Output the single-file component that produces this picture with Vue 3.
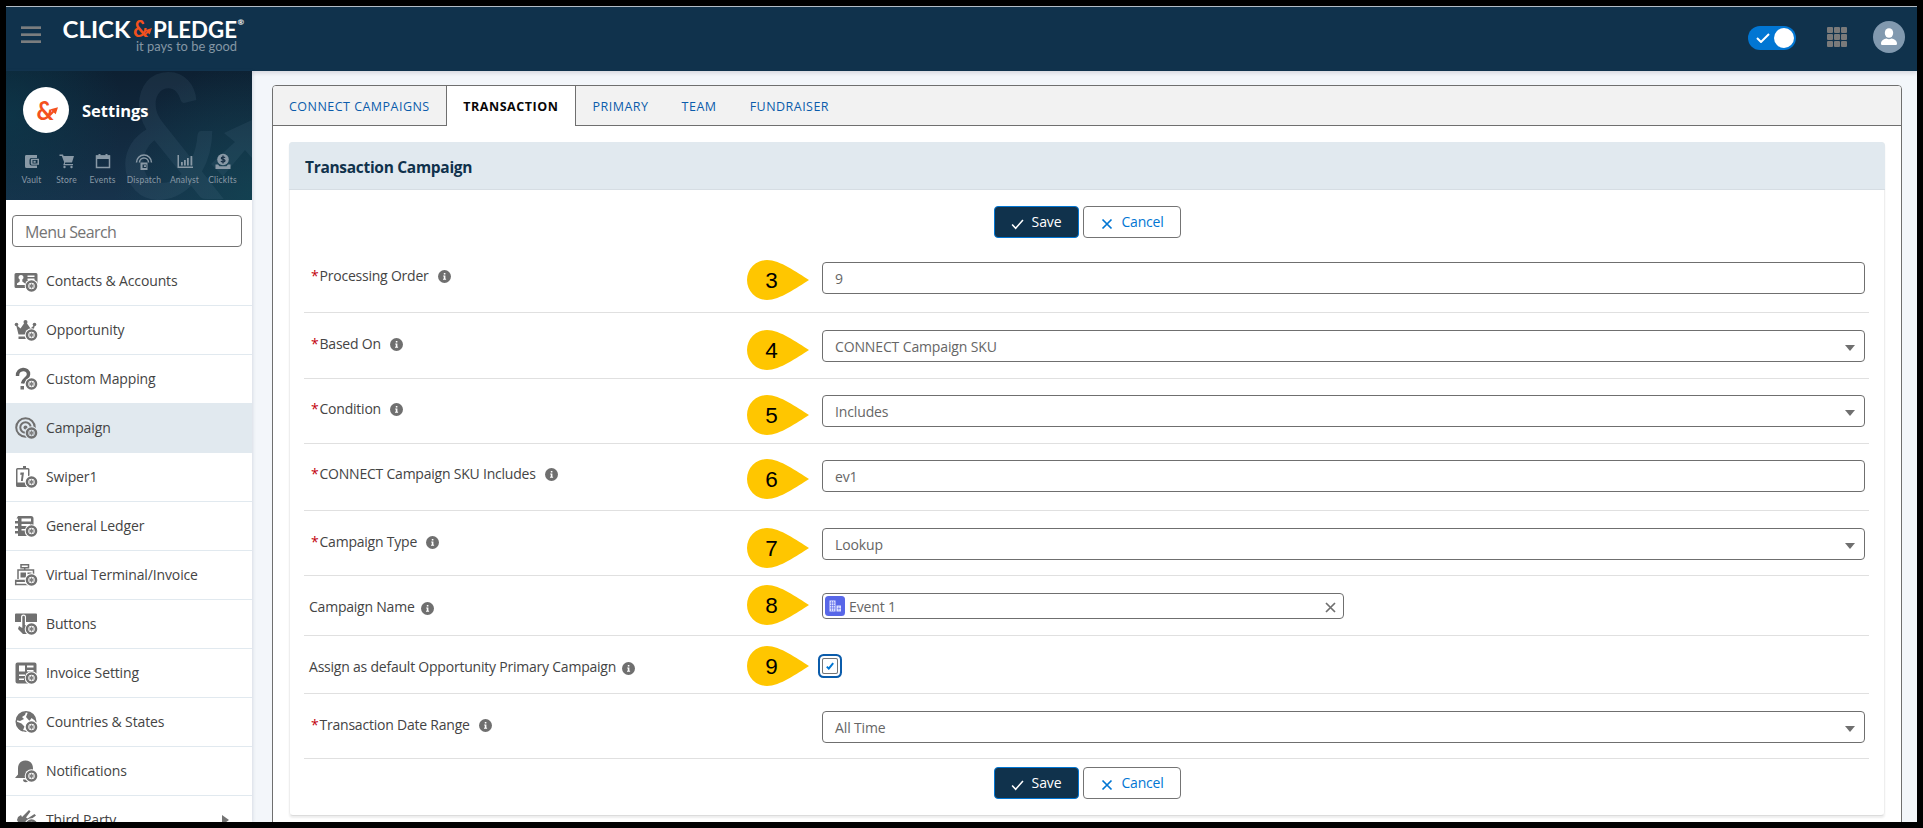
<template>
  <div class="frame">
    <!-- Top bar -->
    <header class="topbar">
      <div class="topbar-left">
        <button class="hamburger" aria-label="Menu"><span></span><span></span><span></span></button>
        <svg class="logo" width="184" height="40" viewBox="0 0 184 40">
          <text class="logo-word" x="-0.5" y="22.5" textLength="68" lengthAdjust="spacingAndGlyphs">CLICK</text>
          <text class="logo-amp" x="70" y="22.3" textLength="15" lengthAdjust="spacingAndGlyphs">&amp;</text>
          <path class="logo-arrow" d="M82 15.200l7-2.200-2.300 6.500-1.700-1.600-3.300 3.400-1.200-1.200 3.200-3.300z" />
          <text class="logo-word" x="90" y="22.5" textLength="84" lengthAdjust="spacingAndGlyphs">PLEDGE</text>
          <text class="logo-reg" x="174.5" y="10">®</text>
          <text class="logo-tag" x="73" y="35.5" textLength="101" lengthAdjust="spacingAndGlyphs">it pays to be good</text>
        </svg>
      </div>
      <div class="topbar-right">
        <div class="toggle">
          <svg width="14" height="10" viewBox="0 0 14 10"><path d="M1 5l4 4L13 1" /></svg>
          <span class="knob"></span>
        </div>
        <div class="waffle"><i v-for="n in 9" :key="n"></i></div>
        <div class="avatar">
          <svg width="32" height="32" viewBox="0 0 32 32">
            <ellipse cx="16" cy="12" rx="4.2" ry="4.8" />
            <path d="M8 22.4c0-3 3.1-4.8 5.4-5 1.7 1.1 3.500 1.100 5.200 0 2.300.2 5.400 2 5.400 5 0 1-.6 1.600-1.500 1.600h-13c-.9 0-1.500-.6-1.500-1.600z" />
          </svg>
        </div>
      </div>
    </header>

    <div class="body">
      <!-- Sidebar -->
      <aside class="sidebar">
        <div class="banner">
          <svg class="banner-mark" width="246" height="129" viewBox="0 0 246 129">
            <text x="114" y="128" textLength="104" lengthAdjust="spacingAndGlyphs">&amp;</text>
            <path d="M218 62l28-13v38l-7-8-22 26-12-12 24-22z" />
          </svg>
          <div class="banner-title">
            <div class="badge">
              <svg width="46" height="46" viewBox="0 0 46 46">
                <text class="badge-amp" x="13.500" y="33" textLength="17" lengthAdjust="spacingAndGlyphs">&amp;</text>
                <path class="logo-arrow" d="M27.500 22.300l7.500-2-2.300 7-1.900-1.800-3.300 3.500-1.400-1.400 3.300-3.500z" />
              </svg>
            </div>
            <h1>Settings</h1>
          </div>
          <nav class="apps">
            <a v-for="app in apps" :key="app.name" class="app">
              <svg width="18" height="18" viewBox="0 0 18 18" v-html="app.icon"></svg>
              <span>{{ app.name }}</span>
            </a>
          </nav>
        </div>

        <input class="menu-search" type="text" placeholder="Menu Search" />

        <ul class="menu">
          <li v-for="item in menu" :key="item.name" :class="{ active: item.name === 'Campaign' }">
            <svg class="menu-icon" width="24" height="24" viewBox="0 0 24 24">
              <g v-html="item.icon"></g>
              <circle cx="17.500" cy="17" r="6.800" class="gear-gap" />
              <circle cx="17.500" cy="17" r="4.500" class="gear-ring" />
              <path class="gear-core" d="M17.500 14.400v5.200M15.300 15.700l4.400 2.600M15.300 18.300l4.400-2.600" />
            </svg>
            <span>{{ item.name }}</span>
            <i v-if="item.children" class="caret"></i>
          </li>
        </ul>
      </aside>

      <!-- Content -->
      <main class="content">
        <div class="tabs">
          <div class="tab-bar">
            <a v-for="tab in tabs" :key="tab" class="tab" :class="{ active: tab === 'Transaction' }">{{ tab }}</a>
          </div>

          <section class="card">
            <h2 class="card-title">Transaction Campaign</h2>
            <div class="actions">
              <button class="btn save">
                <svg width="14" height="12" viewBox="0 0 14 12"><path d="M1.200 6.500l3.800 4L12.800 1.700" /></svg>
                Save
              </button>
              <button class="btn cancel">
                <svg width="12" height="12" viewBox="0 0 12 12"><path d="M1.500 1.500l9 9M10.500 1.500l-9 9" /></svg>
                Cancel
              </button>
            </div>

            <div
              v-for="row in rows"
              :key="row.label"
              class="row"
              :class="{ tight: row.tight }"
              :style="{ height: row.height + 'px' }"
            >
              <div class="label" :class="{ required: row.required }">
                <abbr v-if="row.required">*</abbr>
                <span>{{ row.label }}</span>
                <svg class="info" width="13" height="13" viewBox="0 0 13 13">
                  <circle cx="6.500" cy="6.500" r="6.500" />
                  <path d="M5.800 2.900h1.600v1.600H5.800zM5.200 5.400h2.200v3.300h.7v1H5v-1h.8V6.400h-.6z" />
                </svg>
              </div>

              <div class="pin-cell">
                <svg v-if="row.step" class="pin" :style="{ marginTop: row.pinTop + 'px' }" width="62" height="40" viewBox="0 0 62 40">
                  <path d="M62 20C50 12.500 33 0 20 0a20 20 0 0 0 0 40C33 40 50 27.500 62 20z" />
                  <text x="24.500" y="28" text-anchor="middle">{{ row.step }}</text>
                </svg>
              </div>

              <div class="control">
                <div v-if="row.type === 'lookup'" class="field lookup">
                  <svg width="20" height="20" viewBox="0 0 20 20">
                    <rect width="20" height="20" rx="3.500" fill="#5867e8" />
                    <path d="M4.500 4.500h6v11h-6zM11.500 9.500h4.500v6h-4.500z" fill="#dfe3ff" />
                    <path d="M6.500 5v10M8.600 5v10M5 7h5M5 9.500h5M5 12h5M13.800 10.500v4M12.500 12.500h3" stroke="#5867e8" stroke-width=".6" />
                  </svg>
                  <span>{{ row.value }}</span>
                  <svg class="clear" width="11" height="11" viewBox="0 0 11 11"><path d="M1 1l9 9M10 1l-9 9" /></svg>
                </div>
                <div v-else-if="row.type === 'checkbox'" class="checkbox">
                  <svg width="8" height="8" viewBox="0 0 8 8"><path d="M.8 4.600l2 2L7.200 1.200" /></svg>
                </div>
                <div v-else class="field">
                  <span>{{ row.value }}</span>
                  <i v-if="row.type === 'select'" class="arrow"></i>
                </div>
              </div>
            </div>

            <div class="actions bottom">
              <button class="btn save">
                <svg width="14" height="12" viewBox="0 0 14 12"><path d="M1.200 6.500l3.800 4L12.800 1.700" /></svg>
                Save
              </button>
              <button class="btn cancel">
                <svg width="12" height="12" viewBox="0 0 12 12"><path d="M1.500 1.500l9 9M10.500 1.500l-9 9" /></svg>
                Cancel
              </button>
            </div>
          </section>
        </div>
      </main>
    </div>
  </div>
</template>

<script setup>
const tabs = ['Connect Campaigns', 'Transaction', 'Primary', 'Team', 'Fundraiser']

// Shortcuts under the Settings title
const apps = [
  { name: 'Vault', icon: '<path fill="currentColor" fill-rule="evenodd" d="M3 3h11v3H8.500a2 2 0 0 0-2 2v3.500a2 2 0 0 0 2 2H14V16H3.500A1.500 1.500 0 0 1 2 14.500V4.500A1.500 1.500 0 0 1 3 3zM9 6.700h7v6H9a1.200 1.200 0 0 1-1.200-1.200V8A1.200 1.200 0 0 1 9 6.700zm.5 1.300v3.500H14.500V8zM10.500 8.700h2.200v2h-2.200z"/>' },
  { name: 'Store', icon: '<path fill="currentColor" d="M1.500 2.500H5l.6 1.600H16l-2 6.400H7.300l-.5 1.500H15v1.300H5.200l1-3L3.800 4H1.500z"/><circle cx="6.500" cy="15" r="1.200" fill="currentColor"/><circle cx="13.500" cy="15" r="1.200" fill="currentColor"/>' },
  { name: 'Events', icon: '<path fill="none" stroke="currentColor" stroke-width="1.500" d="M2.500 4h13v11.500h-13z"/><path fill="currentColor" d="M2 3.500h14v3.500H2zM4.500 2h2v2h-2zM11.500 2h2v2h-2z"/>' },
  { name: 'Dispatch', icon: '<path fill="none" stroke="currentColor" stroke-width="1.500" d="M1.500 10.500a7.500 7.500 0 0 1 15 0M4.500 10.500a4.500 4.500 0 0 1 9 0"/><path fill="currentColor" fill-rule="evenodd" d="M5.500 10.500h7V18h-7zm2 2v3.500h4v-3.500zM9 13.300h2v1.800H9z"/>' },
  { name: 'Analyst', icon: '<path fill="currentColor" d="M1.500 3H3v11.500h14V16H1.500zM5 10h1.800v3.500H5zM8 8h1.800v5.500H8zM11 6h1.800v7.500H11zM14.500 4h1.800v9.500h-1.800z"/>' },
  { name: 'ClickIts', icon: '<circle cx="9" cy="7.500" r="5.800" fill="currentColor"/><path fill="none" stroke="#142c42" stroke-width="1.200" d="M11 5.700c-.5-1-3.700-1-3.700.5 0 1.600 3.700.9 3.700 2.600 0 1.500-3.400 1.500-4 .3M9 3.500v8"/><path fill="currentColor" d="M1.500 12.500H4l1.500 1.700h7l1.500-1.700h2.500V17h-15z"/>' }
]

const menu = [
  { name: 'Contacts & Accounts', icon: '<path fill-rule="evenodd" d="M2 4h20a1.500 1.500 0 0 1 1.500 1.500V17H13v2H2A1.500 1.500 0 0 1 .5 17.500v-12A1.500 1.500 0 0 1 2 4zm5 2a2.400 2.400 0 0 0-1.300 4.500v2L3 14.500V16h8v-1.500l-2.700-2v-2A2.400 2.400 0 0 0 7 6zm6.500.5V8h7V6.500zm0 3V11h7V9.500z"/>' },
  { name: 'Opportunity', icon: '<circle cx="2.500" cy="6.500" r="1.800"/><circle cx="11.500" cy="4" r="2"/><circle cx="20.500" cy="6.500" r="1.800"/><path d="M2 6.500l4.500 4L11 4h1l4.500 6.500 4.500-4-2.500 10H4.500zM4.500 18.500h10v2.500h-10z"/>' },
  { name: 'Custom Mapping', icon: '<path fill="none" stroke="#666" stroke-width="3.500" d="M3.500 9C3 .5 15 .5 14.500 7.500c0 4-5.300 4-6 9"/><path d="M6.500 19h3.500v3.500H6.500z"/>' },
  { name: 'Campaign', icon: '<g fill="none" stroke="#707070"><circle cx="11.500" cy="11.500" r="9.300" stroke-width="2"/><circle cx="11.500" cy="11.500" r="5.200" stroke-width="2"/></g><circle cx="11.500" cy="11.500" r="2"/>' },
  { name: 'Swiper1', icon: '<path fill-rule="evenodd" d="M3.500 3H9V1h3v2h2a1.500 1.500 0 0 1 1.500 1.500V22h-12A1.500 1.500 0 0 1 2 20.500v-16A1.500 1.500 0 0 1 3.500 3zm0 1.500v13H14v-13z"/><path d="M6.500 7.500H10L8.800 16H6.900l.8-6.200H6.200z"/>' },
  { name: 'General Ledger', icon: '<path fill-rule="evenodd" d="M4 2h13a2.500 2.500 0 0 1 2.500 2.500V12H18v10H4v-2.500H1V17h3v-2.500H1V12h3V9.500H1V7h3V4.500H2.500zM7.500 4.500v3H17v-3zm0 5.500V12H16v-2zm0 5v1.500H12V15z"/>' },
  { name: 'Virtual Terminal/Invoice', icon: '<path fill="none" stroke="#707070" stroke-width="1.500" d="M7 1.700h7.500v3H7zM10.700 4.700V7M4 16V7h15.500v8M1.700 17.500h12v4h-12z"/><path d="M6.500 9.500h5.500v5H6.500zM13.500 9.500h4v1.800h-4zM2 17h12v2H2z"/>' },
  { name: 'Buttons', icon: '<path fill-rule="evenodd" d="M2 1.500h20a1 1 0 0 1 1 1V10H12V5a2.500 2.500 0 0 0-5 0v5H1V2.500a1 1 0 0 1 1-1z"/><path d="M8.300 5a1.300 1.300 0 0 1 2.600 0v8l4 1.500V22H9L4 17l1-3 3.300 2z"/>' },
  { name: 'Invoice Setting', icon: '<path fill-rule="evenodd" d="M3.500 1.500h17a2 2 0 0 1 2 2V16H16v6.500H3.500a2 2 0 0 1-2-2v-17a2 2 0 0 1 2-2zm1.500 3v6h6v-6zm8 0v2h6.500v-2zm0 4.500v1.500h6.500V9zM5 13.500V15h6v-1.500zm0 4v1.500h5v-1.500z"/>' },
  { name: 'Countries & States', icon: '<circle cx="12" cy="11.500" r="9.800" fill="none" stroke="#707070" stroke-width="1.500"/><path d="M3 7l3-3.500L12 2l-1 3-3 2 2 2-4 2-4-1zM14 2c5 1 7.500 5 7.500 9l-4-3-2 3-3.500-4zM2.500 11.500l5 2 3 3-2 5C4.500 20 2.500 16 2.500 11.500z"/>' },
  { name: 'Notifications', icon: '<path d="M11.500 1.500c5 0 7.500 3.500 7.500 8v6l3 3.500H1l3-3.500v-6c0-4.500 2.500-8 7.500-8zM9 20.500h5.500a2.700 2.700 0 0 1-5.500 0z"/>' },
  { name: 'Third Party', children: true, icon: '<path d="M4 9l3-2 1 2 7-7 1.500 1.500-4.500 6 1.500 1 7-4.500L22 7.500 16 12l-6 9H2l2.500-6-1.500-3z"/>' }
]

const rows = [
  { label: 'Processing Order', required: true, type: 'text', value: '9', step: 3, height: 67, pinTop: 14, tight: true },
  { label: 'Based On', required: true, type: 'select', value: 'CONNECT Campaign SKU', step: 4, height: 66, pinTop: 17 },
  { label: 'Condition', required: true, type: 'select', value: 'Includes', step: 5, height: 65, pinTop: 16, tight: true },
  { label: 'CONNECT Campaign SKU Includes', required: true, type: 'text', value: 'ev1', step: 6, height: 67, pinTop: 15, tight: true },
  { label: 'Campaign Type', required: true, type: 'select', value: 'Lookup', step: 7, height: 65, pinTop: 17 },
  { label: 'Campaign Name', type: 'lookup', value: 'Event 1', step: 8, height: 60, pinTop: 9 },
  { label: 'Assign as default Opportunity Primary Campaign', type: 'checkbox', step: 9, height: 58, pinTop: 10 },
  { label: 'Transaction Date Range', required: true, type: 'select', value: 'All Time', height: 65 }
]
</script>

<style>
body {
  background: #000;
}
</style>

<style scoped>
* {
  box-sizing: border-box;
}

.frame {
  width: 1923px;
  height: 828px;
  border: 6px solid #000;
  background: #f3f6fa;
  display: flex;
  flex-direction: column;
  overflow: hidden;
  font-family: "Open Sans", "Noto Sans", sans-serif;
  font-size: 14px;
  letter-spacing: -0.13px;
  color: #444;
}

/* Top bar */
.topbar {
  flex: none;
  height: 65px;
  background: #10324c;
  border-top: 1px solid #b3bcc5;
  display: flex;
  justify-content: space-between;
  padding: 0 12px 0 15px;
  box-shadow: 0 2px 4px rgba(40, 30, 60, 0.14);
  position: relative;
  letter-spacing: 0;
}

.topbar-left,
.topbar-right {
  display: flex;
  align-items: flex-start;
}

.hamburger {
  width: 20px;
  padding: 0;
  margin: 19px 22px 0 0;
  border: 0;
  background: none;
  display: flex;
  flex-direction: column;
  gap: 4px;
}

.hamburger span {
  height: 3px;
  background: #7b7d7e;
  border-top: 1px solid #56656f;
}

.logo {
  margin-top: 8px;
  overflow: visible;
}

.logo-word {
  font: 700 22px Lato, sans-serif;
  fill: #fff;
}

.logo-amp {
  font: 700 22px Lato, sans-serif;
  fill: #f4511e;
}

.logo-arrow {
  fill: #f4511e;
}

.logo-reg {
  font: 700 8px Lato, sans-serif;
  fill: #fff;
}

.logo-tag {
  font: 400 12.5px Lato, sans-serif;
  fill: #8496a4;
}

.toggle {
  width: 48px;
  height: 24px;
  margin: 19px 31px 0 0;
  padding: 0 2px 0 8px;
  border-radius: 12px;
  background: #0176d3;
  display: flex;
  align-items: center;
  justify-content: space-between;
}

.toggle path {
  fill: none;
  stroke: #fff;
  stroke-width: 2;
}

.knob {
  width: 20px;
  height: 20px;
  border-radius: 50%;
  background: #fff;
}

.waffle {
  display: grid;
  grid-template-columns: repeat(3, 6px);
  grid-auto-rows: 6px;
  gap: 1.2px;
  margin: 20px 26px 0 0;
}

.waffle i {
  background: #7a7a7a;
  border-radius: 1px;
}

.avatar {
  width: 32px;
  height: 32px;
  margin-top: 14px;
  border-radius: 50%;
  background: #8199af;
}

.avatar svg {
  display: block;
  fill: #fff;
}

.body {
  flex: 1;
  min-height: 0;
  display: flex;
}

/* Sidebar */
.sidebar {
  flex: none;
  width: 246px;
  background: #fff;
  box-shadow: 1px 0 3px rgba(60, 80, 110, 0.15);
  overflow: hidden;
  position: relative;
}

.banner {
  position: relative;
  height: 129px;
  padding: 16px 0 0 0;
  background:
    radial-gradient(circle at 100% 100%, rgba(18, 68, 82, 0.8), transparent 50%),
    radial-gradient(circle at 0 35%, rgba(12, 58, 76, 0.7), transparent 45%),
    linear-gradient(180deg, #0d2032, #17334c);
}

.banner-mark {
  position: absolute;
  inset: 0;
  fill: rgba(110, 140, 165, 0.12);
}

.banner-mark text {
  font: 700 172px Lato, sans-serif;
}

.banner-title {
  position: relative;
  display: flex;
  align-items: center;
  gap: 13px;
  padding-left: 17px;
}

.badge {
  width: 46px;
  height: 46px;
  border-radius: 50%;
  background: #fff;
}

.badge svg {
  display: block;
}

.badge-amp {
  font: 700 27px Lato, sans-serif;
  fill: #f4511e;
}

.banner-title h1 {
  margin: 2px 0 0;
  font-size: 16.5px;
  line-height: 24px;
  font-weight: 700;
  letter-spacing: 0;
  color: #fff;
}

.apps {
  position: relative;
  display: grid;
  grid-template-columns: 35px 35px 37px 46px 35px 41px;
  padding: 19px 0 0 8px;
}

.app {
  display: flex;
  flex-direction: column;
  align-items: center;
  gap: 4px;
  color: #8999a6;
  font: 8.5px/12px Lato, sans-serif;
  letter-spacing: 0.2px;
}

.menu-search {
  display: block;
  width: 230px;
  height: 32px;
  margin: 15px 0 10px 6px;
  padding: 2px 12px 0;
  border: 1px solid #747474;
  border-radius: 4px;
  font: 16px "Open Sans", sans-serif;
  letter-spacing: -0.6px;
}

.menu-search::placeholder {
  color: #747474;
}

.menu {
  list-style: none;
  margin: 0;
  padding: 0;
}

.menu li {
  height: 49px;
  display: flex;
  align-items: center;
  gap: 8px;
  padding: 0 23px 1px 8px;
  border-bottom: 1px solid #e1e9ef;
  --row-bg: #fff;
}

.menu li.active {
  background: #e1e9ef;
  --row-bg: #e1e9ef;
}

.menu-icon {
  fill: #707070;
}

.gear-gap {
  fill: var(--row-bg);
}

.gear-ring {
  fill: var(--row-bg);
  stroke: #707070;
  stroke-width: 2.6;
}

.gear-core {
  stroke: #808080;
  stroke-width: 1.3;
}

.caret {
  margin-left: auto;
  border: 5px solid transparent;
  border-left: 7px solid #747474;
  border-right: 0;
}

/* Tabs */
.content {
  flex: 1;
  padding: 14px 15px 0 20px;
}

.tabs {
  height: 760px;
  border: 1px solid #6f6f6f;
  border-radius: 4px;
  background: #fff;
}

.tab-bar {
  display: flex;
  height: 40px;
  background: #f2f2f2;
  border-bottom: 1px solid #6f6f6f;
  border-radius: 3px 3px 0 0;
}

.tab {
  height: 39px;
  padding: 0 16.5px 0 16px;
  font-size: 12.5px;
  line-height: 41px;
  letter-spacing: 0.47px;
  text-transform: uppercase;
  color: #0b5cab;
}

.tab.active {
  height: 40px;
  border: solid #6f6f6f;
  border-width: 0 1px;
  background: #fff;
  color: #080707;
  font-weight: 700;
  letter-spacing: 0.55px;
}

.tab.active ~ .tab {
  padding: 0 16.6px;
}

/* Card */
.card {
  margin: 16px 16px 0;
  height: 674px;
  border: 1px solid #eeeeee;
  border-bottom-color: #dcdcdc;
  border-radius: 4px;
  box-shadow: 0 2px 2px rgba(0, 0, 0, 0.07);
}

.card-title {
  margin: -1px -1px 0;
  height: 48px;
  padding-left: 16px;
  background: #e1e9ef;
  border-bottom: 1px solid #d6dde3;
  border-radius: 4px 4px 0 0;
  font-size: 15.5px;
  line-height: 51px;
  font-weight: 700;
  letter-spacing: -0.3px;
  color: #10324c;
}

.actions {
  display: flex;
  justify-content: center;
  gap: 4px;
  padding: 16px 0 8px;
}

.actions.bottom {
  padding: 8px 0 0;
}

.btn {
  height: 32px;
  padding: 0 16px;
  border: 1px solid #747474;
  border-radius: 4px;
  background: #fff;
  display: flex;
  align-items: center;
  font: 14px/30px "Open Sans", sans-serif;
  letter-spacing: -0.1px;
  color: #0176d3;
}

.btn svg {
  fill: none;
  stroke: currentColor;
  stroke-width: 1.7;
  margin: 3px 8px 0 0;
}

.btn.save {
  width: 85px;
  background: #10324c;
  border-color: #0176d3;
  color: #fff;
}

.btn.cancel {
  width: 98px;
  padding: 0 14px 0 17px;
  letter-spacing: -0.2px;
}

.btn.cancel svg {
  margin-right: 9px;
}

.row {
  display: grid;
  grid-template-columns: 443px 75px 1043px;
  margin: 0 15px 0 14px;
  border-bottom: 1px solid #e0e0e0;
}

.label {
  display: flex;
  align-items: center;
  height: 20px;
  margin-top: 21px;
  padding-left: 5px;
  line-height: 20px;
  letter-spacing: -0.22px;
}

.row.tight .label {
  margin-top: 20px;
}

.label abbr {
  color: #c2000c;
  margin: 0 1px 0 2px;
}

.info {
  margin: 3px 0 0 6px;
  fill: #6f6f6f;
}

.info path {
  fill: #fff;
}

.required .info {
  margin: 1px 0 0 9px;
}

.pin {
  display: block;
  fill: #ffc600;
}

.pin text {
  font: 22.5px "Liberation Sans", Arial, sans-serif;
  fill: #000;
}

.control {
  padding-top: 17px;
}

.row.tight .control {
  padding-top: 16px;
}

.field {
  height: 32px;
  padding: 0 9px 0 12px;
  border: 1px solid #6f6f6f;
  border-radius: 4px;
  background: #fff;
  display: flex;
  align-items: center;
  justify-content: space-between;
  color: #666;
}

.arrow {
  margin-top: 4px;
  border: 5px solid transparent;
  border-top: 6px solid #6f6f6f;
  border-bottom: 0;
}

.lookup {
  width: 522px;
  height: 26px;
  padding: 0 7px 0 2px;
  justify-content: flex-start;
  gap: 4px;
}

.clear {
  margin: 2px 0 0 auto;
  stroke: #6f6f6f;
  stroke-width: 1.7;
}

.checkbox {
  width: 16px;
  height: 16px;
  margin-top: 5px;
  border: 1px solid #747474;
  border-radius: 2px;
  box-shadow: 0 0 0 2px #fff, 0 0 0 4px #0b5cab;
  display: flex;
  align-items: center;
  justify-content: center;
}

.checkbox path {
  fill: none;
  stroke: #0176d3;
  stroke-width: 2;
}
</style>
